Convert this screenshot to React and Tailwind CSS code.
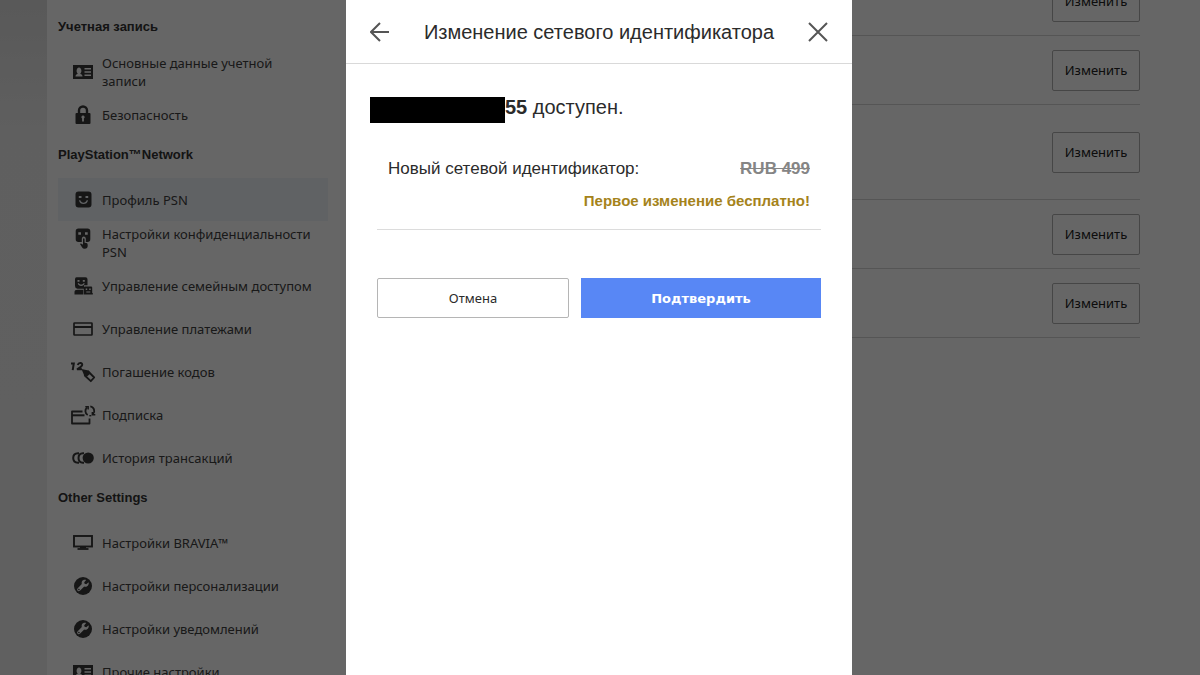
import { useState } from "react";

/* ===============================
   ICONS
=============================== */

function CardIdIcon() {
  return (
    <svg width="20" height="14" viewBox="0 0 20 14" fill="currentColor">
      <path
        fillRule="evenodd"
        d="M0 0h20v14H0z M2.500 11.500h7c0-1.800-.9-2.300-2.300-2.800.9-.9 1.200-2 1.200-3C8.400 3.800 7.400 2.500 6 2.500S3.600 3.800 3.600 5.700c0 1 .3 2.100 1.200 3-1.400.5-2.300 1-2.300 2.800z M11.500 3h6.500v1.500h-6.500z M11.500 6.300h6.500v1.500h-6.500z M11.500 9.600h6.500v1.500h-6.500z"
      />
    </svg>
  );
}

function LockIcon() {
  return (
    <svg width="16" height="20" viewBox="0 0 16 20">
      <path d="M4 9V5.500a4 4 0 0 1 8 0V9" fill="none" stroke="currentColor" strokeWidth="2.400" />
      <path
        fill="currentColor"
        fillRule="evenodd"
        d="M1.500 8h13q1 0 1 1v9q0 1-1 1h-13q-1 0-1-1V9q0-1 1-1z M8 10.500a1.700 1.700 0 0 0-.9 3.100V16.500h1.800v-2.900A1.700 1.700 0 0 0 8 10.500z"
      />
    </svg>
  );
}

function SmileIcon() {
  return (
    <svg width="17" height="17" viewBox="0 0 17 17" fill="currentColor">
      <path
        fillRule="evenodd"
        d="M3.500.5h10Q16.500.5 16.500 3.500v10q0 3-3 3h-10Q.5 16.500.5 13.500v-10Q.5.500 3.500.5z M3.800 5v2h2.700V5z M10.500 5v2h2.700V5z M4 9.300c.5 2.700 2.300 3.800 4.500 3.800s4-1.100 4.500-3.800h-1.300c-.6 1.600-1.800 2.400-3.200 2.400s-2.600-.8-3.200-2.400z"
      />
    </svg>
  );
}

function PrivacyIcon() {
  return (
    <svg width="16" height="21" viewBox="0 0 16 21" fill="currentColor" className="-mt-2">
      <path
        fillRule="evenodd"
        d="M3.500.5h9Q15.300.5 15.300 3.300v8q0 2.700-2.700 2.700h-1.800v-3.500q-.3-2-2-2t-2 2V14H3.400Q.700 14 .700 11.300V3.300Q.700.500 3.500.500z M3.300 4.300v2.500H6V4.300z M10 4.300v2.500h2.700V4.300z"
      />
      <path d="M8 10.700q.8-1 1.600 0v4l1.800.4q1.300.3 1.300 1.600v1q0 3-3 3-2 0-2.700-1.500L5 16q.8-1 2 0l1 .7z" />
    </svg>
  );
}

function FamilyIcon() {
  return (
    <svg width="19" height="18" viewBox="0 0 19 18" fill="currentColor">
      <path
        fillRule="evenodd"
        d="M2.500.3h9q2 0 2 2v6h-3.500v3.500H3.500Q1 11.500 1 9V2.300q0-2 1.500-2z M3.500 3v1.800h2V3z M8.800 3v1.800h2V3z M3.700 6.200c.5 1.900 1.800 2.700 3.500 2.700s3-.8 3.500-2.700H9.500c-.4.900-1.300 1.400-2.300 1.400s-1.900-.5-2.300-1.400z"
      />
      <path d="M.5 17.500V15q0-2.300 3-2.300h5.800v4.800z" />
      <path
        fillRule="evenodd"
        d="M11 9.500h6.200q1 0 1 1V16h.6v1.500h-9V10.500q0-1 1.200-1z M11.700 11.500v1.500h1.500v-1.500z M15.200 11.500v1.500h1.500v-1.500z M12.300 14.500v1h4v-1z"
      />
    </svg>
  );
}

function PaymentIcon() {
  return (
    <svg width="20" height="14" viewBox="0 0 20 14" fill="none" stroke="currentColor" strokeWidth="1.700">
      <rect x="1" y="1" width="18" height="12" rx=".5" />
      <path d="M1 5h18" strokeWidth="2" />
    </svg>
  );
}

function RedeemIcon() {
  return (
    <svg width="26" height="22" viewBox="0 0 26 22" fill="none" stroke="currentColor" strokeWidth="2">
      <path d="M1 2.500h2.800L2.700 9.200" />
      <path d="M7.700 4Q8.500 1.700 10.700 2 12.800 2.500 12 4.500 11 6.300 7 8.300h5" />
      <path d="M11.500 8l7 1.500 2 3-3.500 3-3-1.500z" fill="currentColor" stroke="none" />
      <path d="M18.300 10.500l5.900 6-3.400 3.700-6-5.700z" strokeWidth="1.800" strokeLinejoin="round" />
    </svg>
  );
}

function SubscriptionIcon() {
  return (
    <svg width="26" height="20" viewBox="0 0 26 20" fill="none" stroke="currentColor" strokeWidth="1.800">
      <path d="M12.500 6.500H2v12h17.500v-5" strokeLinejoin="round" />
      <path d="M2 10.300h12.500" strokeWidth="2" />
      <path d="M17.700 10A4.500 4.500 0 0 1 17.200 2.500M20.300 1.300a4.600 4.600 0 0 1 2.700 7.700" />
      <path d="M15.300 1.700h2.900v2.800M25.300 9.700h-3V6.900" strokeWidth="1.400" />
      <path d="M21.300 10.700h-2" strokeWidth="1.400" />
    </svg>
  );
}

function HistoryIcon() {
  return (
    <svg width="22" height="12" viewBox="0 0 22 12" fill="none" stroke="currentColor" strokeWidth="2">
      <path d="M7 1.300H6Q1.200 1.500 1.200 6T6 10.700h1" />
      <path d="M12 1.300h-1Q6.500 1.500 6.500 6t4.500 4.700h1" />
      <circle cx="16.200" cy="6" r="5.600" fill="currentColor" stroke="none" />
    </svg>
  );
}

function TvIcon() {
  return (
    <svg width="20" height="15" viewBox="0 0 20 15" fill="none" stroke="currentColor">
      <rect x="1" y="1" width="18" height="10.500" strokeWidth="1.900" />
      <path d="M4.500 14h11" strokeWidth="1.800" />
      <path d="M7 12.500h6" strokeWidth="2" />
    </svg>
  );
}

function WrenchIcon() {
  return (
    <svg width="18" height="18" viewBox="0 0 18 18">
      <circle cx="9" cy="9" r="9" fill="currentColor" />
      <path
        fill="#fff"
        d="M14.600 5.200l-2.300 2-1.700-.4-.4-1.600 2-2.200C10.500 2.500 8.500 3 7.800 4.800c-.3.800-.2 1.600 0 2.300l-4.300 4.300c-1.300 1.500.8 3.700 2.400 2.300l4.300-4.200c2.500.8 5.200-1.300 4.400-4.300zM5.600 12.900a.8.800 0 1 1-1.100-1.100.8.800 0 0 1 1.100 1.100z"
      />
    </svg>
  );
}

/* ===============================
   DATA
=============================== */

const sections = [
  {
    title: "Учетная запись",
    items: [
      { label: "Основные данные учетной записи", icon: CardIdIcon },
      { label: "Безопасность", icon: LockIcon },
    ],
  },
  {
    title: "PlayStation™Network",
    items: [
      { label: "Профиль PSN", icon: SmileIcon, active: true },
      { label: "Настройки конфиденциальности PSN", icon: PrivacyIcon },
      { label: "Управление семейным доступом", icon: FamilyIcon },
      { label: "Управление платежами", icon: PaymentIcon },
      { label: "Погашение кодов", icon: RedeemIcon },
      { label: "Подписка", icon: SubscriptionIcon },
      { label: "История трансакций", icon: HistoryIcon },
    ],
  },
  {
    title: "Other Settings",
    items: [
      { label: "Настройки BRAVIA™", icon: TvIcon },
      { label: "Настройки персонализации", icon: WrenchIcon },
      { label: "Настройки уведомлений", icon: WrenchIcon },
      { label: "Прочие настройки", icon: CardIdIcon },
    ],
  },
];

const profileRows = [
  { id: "name" },
  { id: "onlineId" },
  { id: "avatar", tall: true },
  { id: "about" },
  { id: "languages" },
];

/* ===============================
   PAGE PARTS
=============================== */

function Sidebar() {
  return (
    <nav className="w-[299px] shrink-0 pl-[11px] pr-[18px] pt-2">

      {sections.map((section) => (

        <section key={section.title}>

          <h2 className="flex h-[42px] items-center pb-1 font-['Liberation_Sans',sans-serif] text-[13px] font-bold text-[#333]">
            {section.title}
          </h2>

          <ul>
            {section.items.map((item) => (
              <li key={item.label}>
                <a
                  href="#"
                  className={`flex h-[43px] items-center gap-1.5 px-3 text-[13px] leading-[18px] ${
                    item.active ? "bg-[#f0f5fa]" : ""
                  }`}
                >
                  <span className="flex w-[26px] shrink-0 justify-center text-[#383838]">
                    <item.icon />
                  </span>
                  {item.label}
                </a>
              </li>
            ))}
          </ul>

        </section>

      ))}

    </nav>
  );
}

function ProfileSettings() {
  return (
    <main className="-mt-[33px] flex-1 pr-[60px]">

      {profileRows.map((row) => (

        <div
          key={row.id}
          className={`flex items-center justify-end border-b border-[#d5d5d5] ${
            row.tall ? "h-[95px]" : "h-[69px]"
          }`}
        >
          <button className="h-[41px] w-[88px] rounded-xs border border-[#b0b0b0] pt-0.5 text-[13px] text-[#222]">
            Изменить
          </button>
        </div>

      ))}

    </main>
  );
}

function OnlineIdModal({ onClose }) {
  return (
    <div className="fixed inset-0 flex justify-center bg-black/60 pr-0.5">

      <div
        role="dialog"
        aria-labelledby="modal-title"
        className="w-full max-w-[506px] bg-white font-['Liberation_Sans',sans-serif] text-[#2b2b2b]"
      >

        {/* HEADER */}

        <header className="flex h-16 items-center justify-between border-b border-[#d9d9d9] px-6">

          <button aria-label="Назад" onClick={onClose}>
            <svg width="20" height="20" viewBox="0 0 20 20" fill="none" stroke="#555" strokeWidth="2">
              <path d="M10 1 1 10l9 9M1 10H19" />
            </svg>
          </button>

          <h1 id="modal-title" className="text-[20px]">
            Изменение сетевого идентификатора
          </h1>

          <button aria-label="Закрыть" onClick={onClose}>
            <svg width="20" height="20" viewBox="0 0 20 20" fill="none" stroke="#555" strokeWidth="2">
              <path d="M1 1l18 18M19 1 1 19" />
            </svg>
          </button>

        </header>

        {/* AVAILABILITY */}

        <p className="mt-[33px] flex px-6 text-[20px] leading-5">
          <span className="h-[26px] w-[135px] bg-black" />
          <span className="whitespace-pre">
            <b>55</b> доступен.
          </span>
        </p>

        {/* PRICE */}

        <div className="mx-[31px] mt-[33px] border-b border-[#dcdcdc] px-[11px] pb-4">

          <dl className="flex justify-between text-[17px] leading-[25px]">
            <dt>Новый сетевой идентификатор:</dt>
            <dd className="font-bold text-[#858585]">
              <s>RUB 499</s>
            </dd>
          </dl>

          <p className="mt-2 text-right text-[15px] leading-6 font-bold text-[#a5831b]">
            Первое изменение бесплатно!
          </p>

        </div>

        {/* ACTIONS */}

        <div className="mx-[31px] mt-12 grid grid-cols-[4fr_5fr] gap-3 text-[13px]">
          <button
            onClick={onClose}
            className="h-10 rounded-xs border border-[#b5b5b5] pt-0.5 font-['Noto_Sans',sans-serif]"
          >
            Отмена
          </button>
          <button
            onClick={onClose}
            className="h-10 bg-[#5887f5] pt-0.5 font-['DejaVu_Sans',sans-serif] font-bold text-white"
          >
            Подтвердить
          </button>
        </div>

      </div>

    </div>
  );
}

function App() {

  const [showModal, setShowModal] = useState(true);

  return (
    <div className="flex h-screen overflow-hidden bg-white font-['Noto_Sans',sans-serif] text-[#404040]">

      <div className="w-[47px] shrink-0 bg-linear-to-b from-[#dedede] via-[#eeeeee] via-20% to-[#f0f0f0]" />

      <Sidebar />

      <ProfileSettings />

      {showModal && <OnlineIdModal onClose={() => setShowModal(false)} />}

    </div>
  );
}

export default App;
